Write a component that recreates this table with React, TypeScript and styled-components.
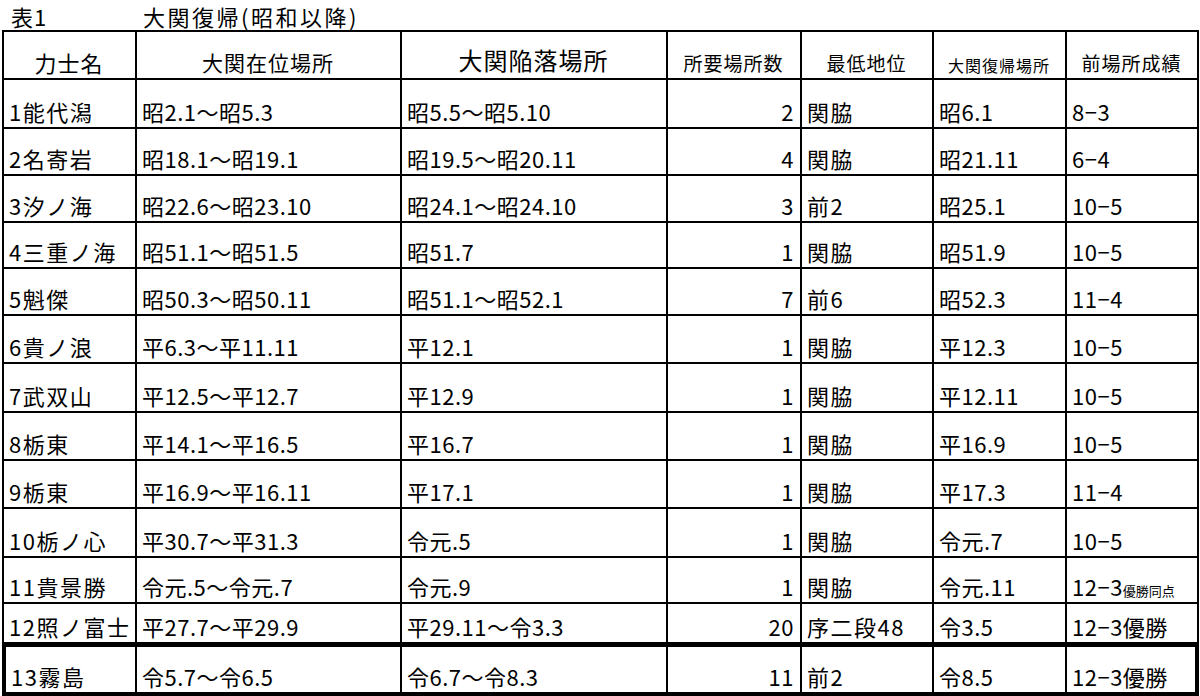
import React, { FunctionComponent } from 'react';
import styled, { createGlobalStyle } from 'styled-components';

type Align = 'left' | 'center' | 'right';

interface Row {
  cells: string[];
  height: number;
  note?: string;
}

const columns = [135, 265, 266, 134, 132, 133, 132];
const lineColor = '#000000';

const GlobalStyle = createGlobalStyle`
  *, *::before, *::after {
    box-sizing: border-box;
  }

  body {
    margin: 0;
    background: #ffffff;
    color: #000000;
    font-family: "Noto Sans CJK JP", "Noto Sans", sans-serif;
    font-weight: 400;
  }
`;

const Page = styled.div`
  width: 1200px;
  height: 696px;
  overflow: hidden;
  padding-left: 2px;
`;

const Caption = styled.div`
  display: flex;
  align-items: flex-end;
  height: 30px;
  font-size: 22px;
  letter-spacing: 2.5px;
  line-height: 1.2;
  padding-bottom: 1px;
`;

const CaptionNo = styled.span`
  width: 141px;
  padding-left: 9px;
  letter-spacing: 1px;
`;

const Grid = styled.div`
  display: flex;
  flex-direction: column;
  width: ${columns.reduce((a, b) => a + b, 0)}px;
  border-top: 2px solid ${lineColor};
`;

const GridRow = styled.div<{ $height: number }>`
  display: grid;
  grid-template-columns: ${columns.map((w) => `${w}px`).join(' ')};
  height: ${(p) => p.$height}px;
`;

const Cell = styled.div<{
  $align: Align;
  $first: boolean;
  $last: boolean;
  $boxed: boolean;
}>`
  display: flex;
  align-items: flex-end;
  justify-content: ${(p) =>
    p.$align === 'center'
      ? 'center'
      : p.$align === 'right'
        ? 'flex-end'
        : 'flex-start'};
  padding: 0 6px 3px 5px;
  white-space: nowrap;
  overflow: hidden;
  line-height: 1.2;
  border-right: ${(p) => (p.$boxed && p.$last ? 4 : 2)}px solid ${lineColor};
  border-bottom: ${(p) => (p.$boxed ? 4 : 2)}px solid ${lineColor};
  border-left: ${(p) => (p.$first ? (p.$boxed ? 4 : 2) : 0)}px solid
    ${lineColor};
  border-top: ${(p) => (p.$boxed ? 3 : 0)}px solid ${lineColor};
`;

const HeadText = styled.span<{ $size: number }>`
  font-size: ${(p) => p.$size}px;
  letter-spacing: 1px;
`;

const BodyText = styled.span<{ $wide: boolean }>`
  font-size: 22px;
  letter-spacing: ${(p) => (p.$wide ? 1.5 : 0.5)}px;
`;

const Note = styled.span`
  font-size: 13px;
  letter-spacing: 0;
`;

const headers: { label: string; size: number }[] = [
  { label: '力士名', size: 22 },
  { label: '大関在位場所', size: 21 },
  { label: '大関陥落場所', size: 24 },
  { label: '所要場所数', size: 19 },
  { label: '最低地位', size: 19 },
  { label: '大関復帰場所', size: 16 },
  { label: '前場所成績', size: 19 },
];

const rows: Row[] = [
  { cells: ['1能代潟', '昭2.1～昭5.3', '昭5.5～昭5.10', '2', '関脇', '昭6.1', '8−3'], height: 49 },
  { cells: ['2名寄岩', '昭18.1～昭19.1', '昭19.5～昭20.11', '4', '関脇', '昭21.11', '6−4'], height: 47 },
  { cells: ['3汐ノ海', '昭22.6～昭23.10', '昭24.1～昭24.10', '3', '前2', '昭25.1', '10−5'], height: 47 },
  { cells: ['4三重ノ海', '昭51.1～昭51.5', '昭51.7', '1', '関脇', '昭51.9', '10−5'], height: 46 },
  { cells: ['5魁傑', '昭50.3～昭50.11', '昭51.1～昭52.1', '7', '前6', '昭52.3', '11−4'], height: 47 },
  { cells: ['6貴ノ浪', '平6.3～平11.11', '平12.1', '1', '関脇', '平12.3', '10−5'], height: 48 },
  { cells: ['7武双山', '平12.5～平12.7', '平12.9', '1', '関脇', '平12.11', '10−5'], height: 49 },
  { cells: ['8栃東', '平14.1～平16.5', '平16.7', '1', '関脇', '平16.9', '10−5'], height: 48 },
  { cells: ['9栃東', '平16.9～平16.11', '平17.1', '1', '関脇', '平17.3', '11−4'], height: 48 },
  { cells: ['10栃ノ心', '平30.7～平31.3', '令元.5', '1', '関脇', '令元.7', '10−5'], height: 49 },
  { cells: ['11貴景勝', '令元.5～令元.7', '令元.9', '1', '関脇', '令元.11', '12−3'], height: 46, note: '優勝同点' },
  { cells: ['12照ノ富士', '平27.7～平29.9', '平29.11～令3.3', '20', '序二段48', '令3.5', '12−3優勝'], height: 40 },
  { cells: ['13霧島', '令5.7～令6.5', '令6.7～令8.3', '11', '前2', '令8.5', '12−3優勝'], height: 52 },
];

const App: FunctionComponent = () => {
  const last = columns.length - 1;

  return (
    <Page>
      <GlobalStyle />
      <Caption>
        <CaptionNo>表1</CaptionNo>
        <span>大関復帰(昭和以降)</span>
      </Caption>
      <Grid>
        <GridRow $height={48}>
          {headers.map((h, i) => (
            <Cell
              key={h.label}
              $align="center"
              $first={i === 0}
              $last={i === last}
              $boxed={false}
            >
              <HeadText $size={h.size}>{h.label}</HeadText>
            </Cell>
          ))}
        </GridRow>
        {rows.map((row, r) => {
          const boxed = r === rows.length - 1;
          return (
            <GridRow key={row.cells[0]} $height={row.height}>
              {row.cells.map((text, i) => (
                <Cell
                  key={i}
                  $align={i === 3 ? 'right' : 'left'}
                  $first={i === 0}
                  $last={i === last}
                  $boxed={boxed}
                >
                  <BodyText $wide={i === 0 || i === 4}>
                    {text}
                    {i === last && row.note && <Note>{row.note}</Note>}
                  </BodyText>
                </Cell>
              ))}
            </GridRow>
          );
        })}
      </Grid>
    </Page>
  );
};

export default App;
